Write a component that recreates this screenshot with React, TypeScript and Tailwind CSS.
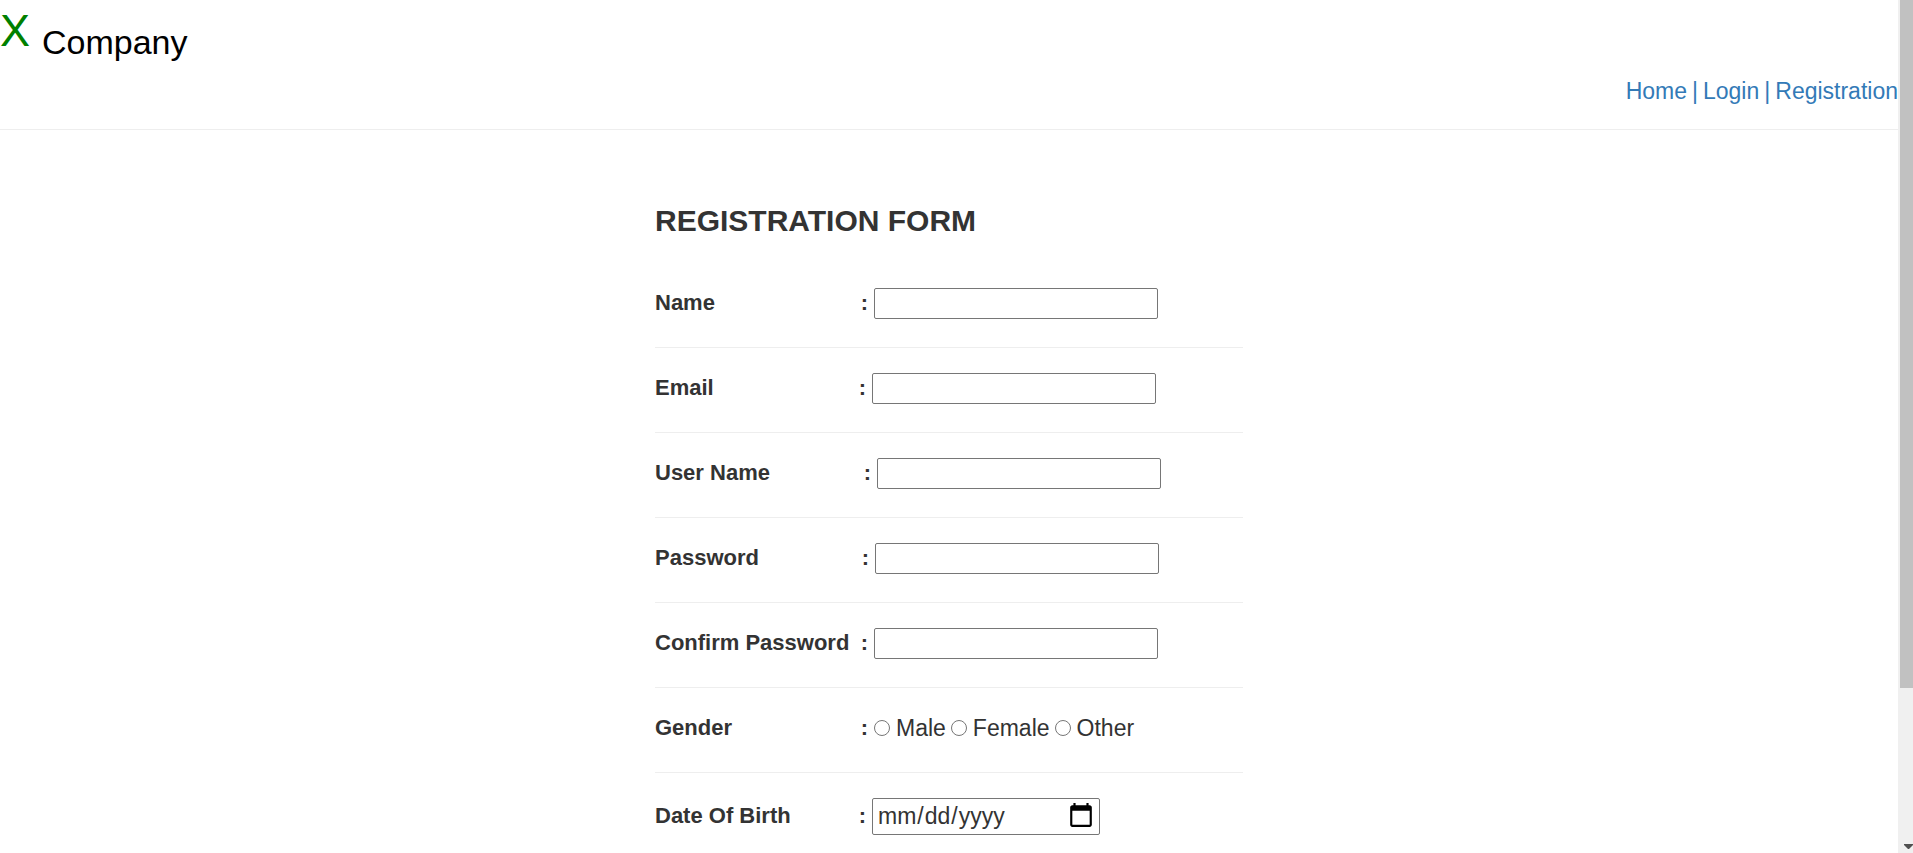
type Field = {
  id: string;
  label: string;
  type: string;
  labelWidth: string;
};

const fields: Field[] = [
  { id: "name", label: "Name", type: "text", labelWidth: "w-[219px]" },
  { id: "email", label: "Email", type: "email", labelWidth: "w-[217px]" },
  { id: "username", label: "User Name", type: "text", labelWidth: "w-[222px]" },
  { id: "password", label: "Password", type: "password", labelWidth: "w-[220px]" },
  { id: "confirm", label: "Confirm Password", type: "password", labelWidth: "w-[219px]" },
];

const genders = ["Male", "Female", "Other"];

const rowClass = "flex items-center border-b border-[#eeeeee]";
const labelClass =
  "flex shrink-0 justify-between pb-px pr-1.5 text-[22px] leading-8 font-bold whitespace-nowrap";

function Header() {
  return (
    <header className="border-b border-[#eeeeee] pb-6">
      <div className="flex h-[77px] items-start text-black">
        <span className="w-[42px] text-[45px] leading-[62px] text-[#008000]">X</span>
        <span className="text-[34px] leading-[84px]">Company</span>
      </div>
      <nav className="flex h-7 items-center justify-end gap-[5px] text-[#337ab7]">
        <a href="#home">Home</a>
        <span>|</span>
        <a href="#login">Login</a>
        <span>|</span>
        <a href="#registration">Registration</a>
      </nav>
    </header>
  );
}

function ScrollRail() {
  return (
    <div aria-hidden="true" className="flex w-[15px] shrink-0 flex-col justify-between bg-[#f0f0f0] pl-0.5">
      <div className="h-[688px] bg-[#c1c1c1]" />
      <svg className="mb-1 ml-1 h-[5px] w-[9px]" viewBox="0 0 9 5" fill="#505050">
        <path d="M0 0h9v1L5 5h-1L0 1z" />
      </svg>
    </div>
  );
}

export default function App() {
  return (
    <div className="flex h-screen overflow-hidden bg-white font-['Liberation_Sans',Arial,sans-serif] text-[23px] leading-8 text-[#333333]">
      <div className="min-w-0 flex-1">
        <Header />
        <main className="mx-auto w-full max-w-[588px] pt-[73px]">
          <h1 className="mb-6 text-[30px] leading-9 font-bold">REGISTRATION FORM</h1>
          <form>
            {fields.map((f) => (
              <div key={f.id} className={`${rowClass} h-[85px] pb-[3px]`}>
                <label htmlFor={f.id} className={`${labelClass} ${f.labelWidth}`}>
                  <span>{f.label}</span>
                  <span>:</span>
                </label>
                <input
                  id={f.id}
                  type={f.type}
                  className="h-[31px] w-[284px] appearance-none rounded-xs border border-[#767676] bg-white px-1"
                />
              </div>
            ))}
            <div className={`${rowClass} h-[85px] pb-[3px]`} role="radiogroup" aria-labelledby="gender">
              <span id="gender" className={`${labelClass} w-[219px]`}>
                <span>Gender</span>
                <span>:</span>
              </span>
              <div className="flex items-center gap-[5px] pb-px">
                {genders.map((g) => (
                  <label key={g} className="flex items-center gap-1.5">
                    <input type="radio" name="gender" value={g} className="h-4 w-4" />
                    {g}
                  </label>
                ))}
              </div>
            </div>
            <div className="flex h-[87px] items-center">
              <label htmlFor="dob" className={`${labelClass} w-[217px]`}>
                <span>Date Of Birth</span>
                <span>:</span>
              </label>
              <input
                id="dob"
                type="date"
                className="h-[37px] w-[228px] rounded-xs border border-[#767676] bg-white pr-1 pb-0.5 pl-1 [&::-webkit-calendar-picker-indicator]:h-7 [&::-webkit-calendar-picker-indicator]:w-7 [&::-webkit-calendar-picker-indicator]:p-0"
              />
            </div>
          </form>
        </main>
      </div>
      <ScrollRail />
    </div>
  );
}
